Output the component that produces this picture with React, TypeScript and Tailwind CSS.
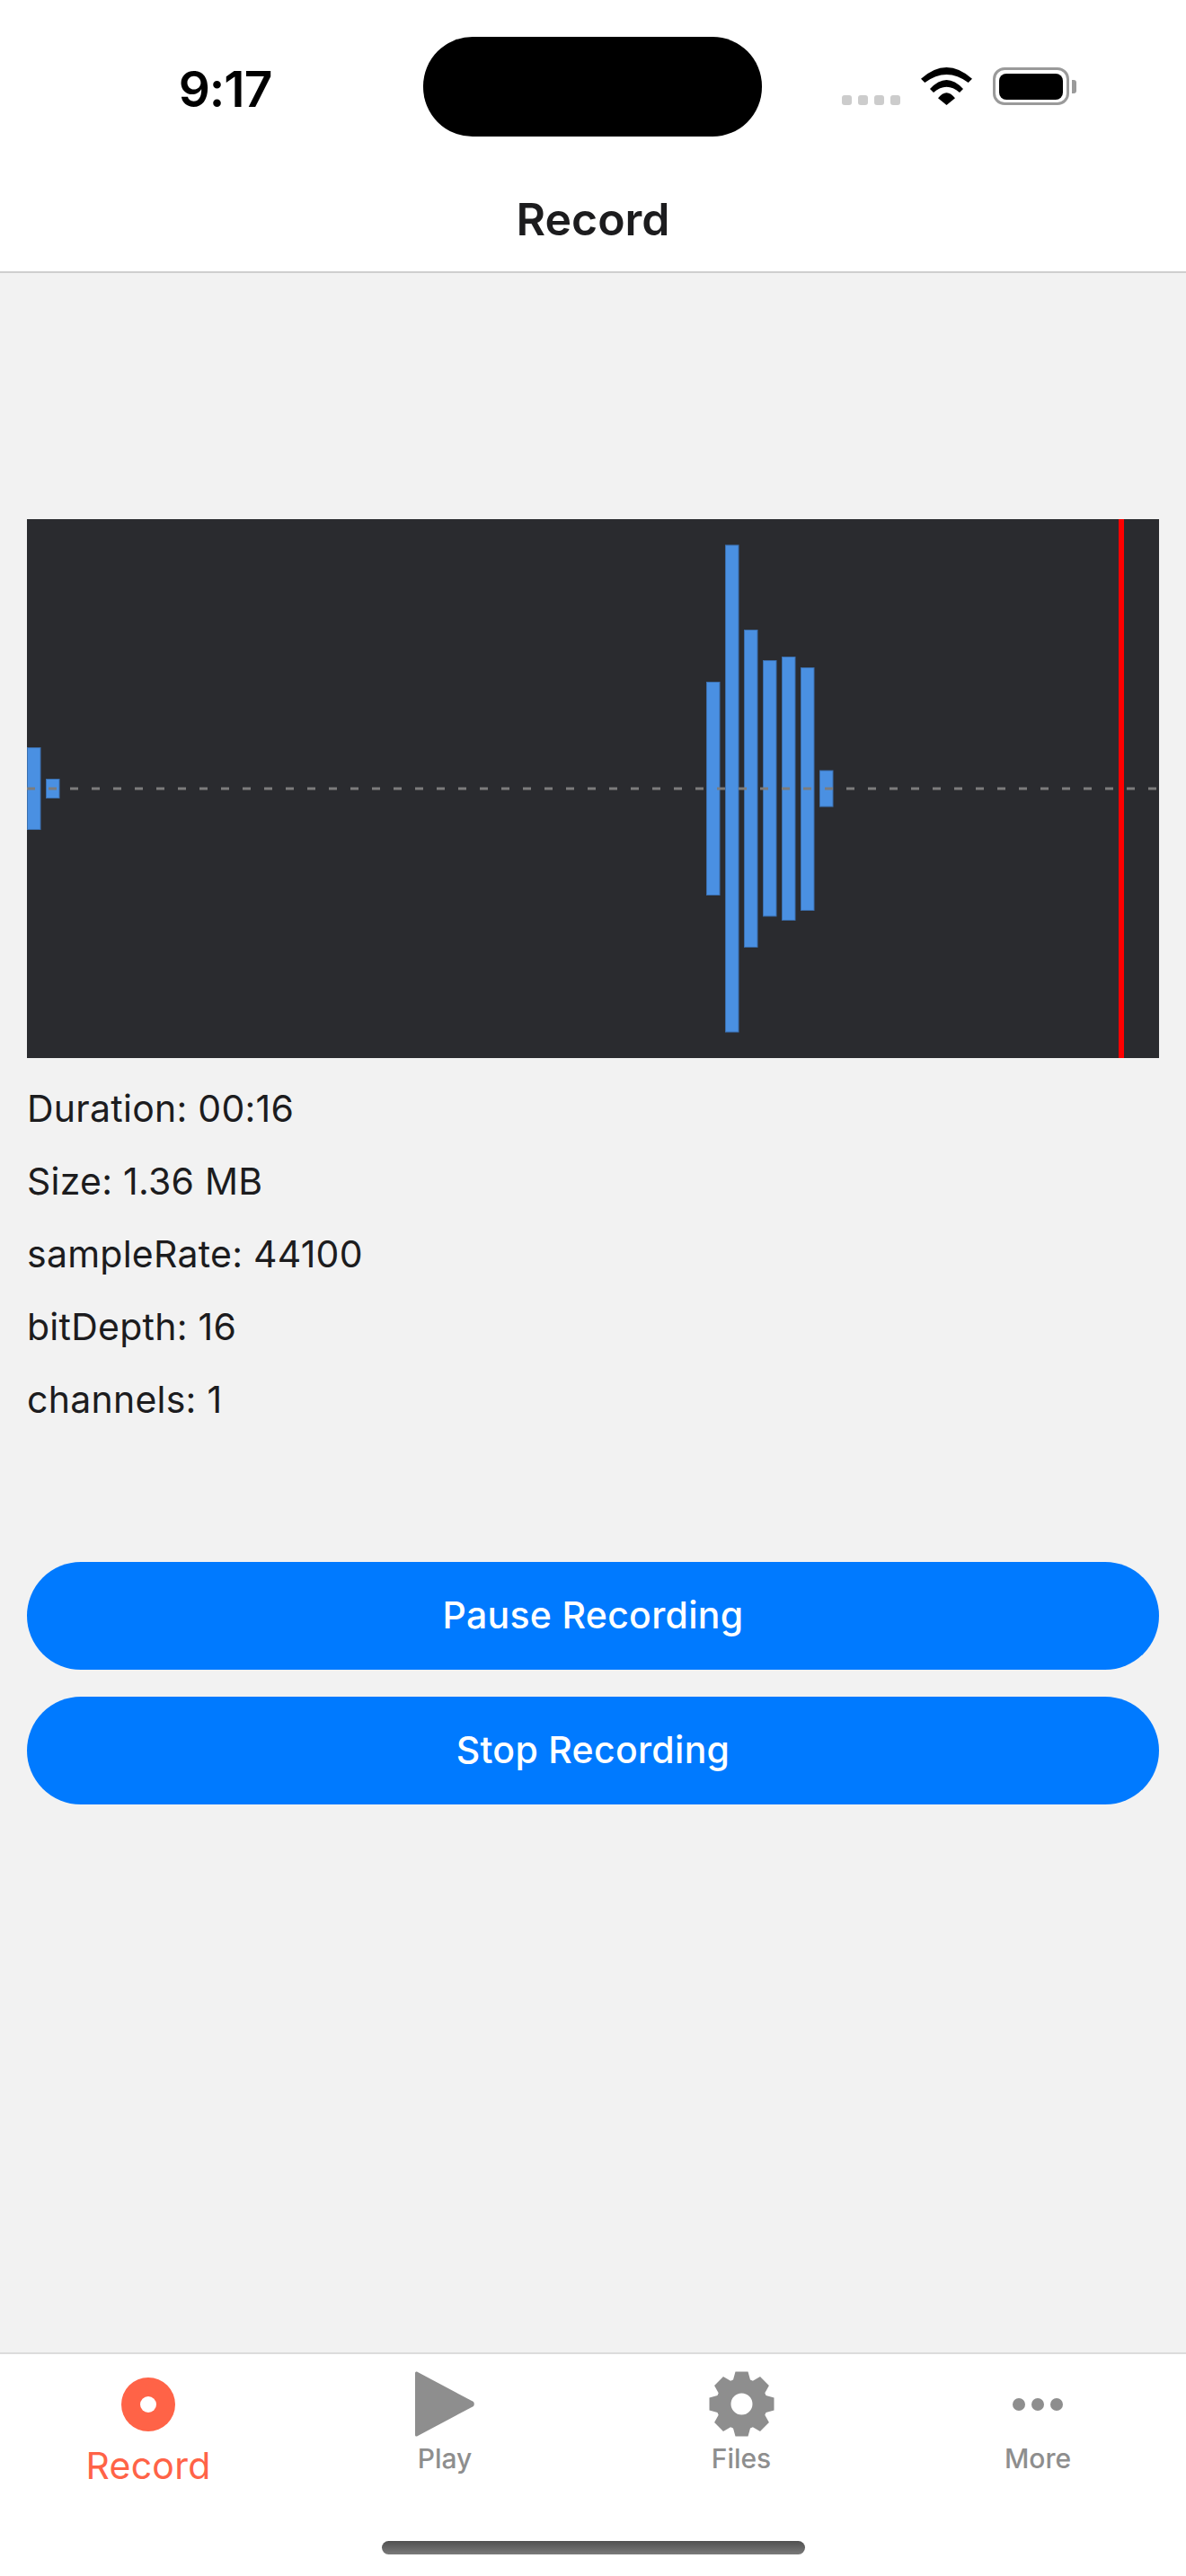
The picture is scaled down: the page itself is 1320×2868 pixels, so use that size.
const BARS = [
  { x: 0, y: 254, h: 92 },
  { x: 21, y: 289, h: 22 },
  { x: 756, y: 181, h: 238 },
  { x: 777, y: 28.5, h: 543 },
  { x: 798, y: 123, h: 354 },
  { x: 819, y: 157, h: 285.5 },
  { x: 840, y: 153, h: 294 },
  { x: 861, y: 165, h: 271 },
  { x: 882, y: 279.5, h: 41 },
];

const STATS = ['Duration: 00:16', 'Size: 1.36 MB', 'sampleRate: 44100', 'bitDepth: 16', 'channels: 1'];

function gearPath() {
  const cx = 36.5;
  const cy = 36;
  const pts: string[] = [];
  for (let i = 0; i < 8; i++) {
    const a = (i * Math.PI) / 4 - Math.PI / 2;
    const at = (r: number, off: number) => {
      const x = cx + r * Math.cos(a) - off * Math.sin(a);
      const y = cy + r * Math.sin(a) + off * Math.cos(a);
      return `${x.toFixed(2)} ${y.toFixed(2)}`;
    };
    pts.push(`${pts.length ? 'L' : 'M'}${at(27, -9.5)}`, `L${at(36, -7)}`, `L${at(36, 7)}`, `L${at(27, 9.5)}`);
  }
  return pts.join(' ') + ' Z M48.5 36 A12 12 0 1 0 24.5 36 A12 12 0 1 0 48.5 36 Z';
}

function Waveform() {
  return (
    <svg viewBox="0 0 1260 600" className="block h-[600px] w-[1260px] bg-[#2a2b2f]">
      {BARS.map((b) => (
        <rect
          key={b.x}
          x={b.x + 0.5}
          y={b.y + 0.5}
          width={14.5}
          height={b.h - 1}
          fill="#4a90e2"
          stroke="#3b6fae"
          strokeWidth={1}
        />
      ))}
      <line x1="0" y1="300" x2="1260" y2="300" stroke="#7c7c7c" strokeWidth={3} strokeDasharray="9 15" />
      <rect x="1215" y="0" width="6" height="600" fill="#ff0000" />
    </svg>
  );
}

function TabBar() {
  return (
    <div className="grid h-[249px] grid-cols-4 border-t-2 border-[#dcdcdc] bg-white">
      <div className="flex flex-col items-center pt-[26px]">
        <div className="flex h-[60px] w-[60px] items-center justify-center rounded-full bg-[#ff6347]">
          <div className="h-[18px] w-[18px] rounded-full bg-white" />
        </div>
        <span className="mt-[14px] text-[41px] leading-[48px] tracking-[0.25px] text-[#ff6347]">Record</span>
      </div>
      <div className="flex flex-col items-center pt-[19px]">
        <svg width="66" height="73" viewBox="0 0 66 73" className="block">
          <path d="M2 0.5 L65 34 Q66.5 36.5 65 39 L2 72.5 Q0 73 0 71 L0 2 Q0 0 2 0.5 Z" fill="#8e8e8e" />
        </svg>
        <span className="mt-[6px] text-[30px] leading-[36px] font-medium text-[#8e8e8e]">Play</span>
      </div>
      <div className="flex flex-col items-center pt-[19px]">
        <svg width="73" height="73" viewBox="0 0 73 72" className="block">
          <path d={gearPath()} fill="#8e8e8e" fillRule="evenodd" />
        </svg>
        <span className="mt-[6px] text-[30px] leading-[36px] font-medium text-[#8e8e8e]">Files</span>
      </div>
      <div className="flex flex-col items-center pt-[19px]">
        <div className="flex h-[73px] items-center gap-[7px]">
          <div className="h-[14px] w-[14px] rounded-full bg-[#8e8e8e]" />
          <div className="h-[14px] w-[14px] rounded-full bg-[#8e8e8e]" />
          <div className="h-[14px] w-[14px] rounded-full bg-[#8e8e8e]" />
        </div>
        <span className="mt-[6px] text-[30px] leading-[36px] font-medium text-[#8e8e8e]">More</span>
      </div>
    </div>
  );
}

export default function App() {
  return (
    <div className="relative flex h-[2868px] w-[1320px] flex-col overflow-hidden bg-[#f2f2f2] font-['Inter',sans-serif] text-[#1c1c1e]">
      <header className="h-[304px] shrink-0 border-b-2 border-[#cfcfcf] bg-white">
        <div className="flex h-[152px] items-start pt-[41px]">
          <div className="flex h-[111px] w-[471px] items-center justify-center pl-[30px] pt-[5px]">
            <span className="text-[55px] leading-none font-semibold tracking-[-1px] text-black">9:17</span>
          </div>
          <div className="h-[111px] w-[377px] rounded-[55px] bg-black" />
          <div className="flex h-[76px] items-end pl-[89px]">
            <div className="flex gap-[7px]">
              <div className="h-[11px] w-[11px] rounded-[3px] bg-[#cccccc]" />
              <div className="h-[11px] w-[11px] rounded-[3px] bg-[#cccccc]" />
              <div className="h-[11px] w-[11px] rounded-[3px] bg-[#cccccc]" />
              <div className="h-[11px] w-[11px] rounded-[3px] bg-[#cccccc]" />
            </div>
            <svg width="57" height="42" viewBox="0 0 57 42" className="ml-[23px] block">
              <path d="M0 12.7 Q28.5 -12.7 57 12.7 L52.7 17 Q28.5 -1 4.3 17 Z" fill="#000" />
              <path d="M10 24 Q28.5 4 47 24 L43 28 Q28.5 15.5 14 28 Z" fill="#000" />
              <path d="M19 34.3 Q28.5 22 38 34.3 L28.5 42 Z" fill="#000" />
            </svg>
            <div className="ml-[23px] flex h-[42px] w-[85px] items-center justify-center rounded-[13px] border-[3px] border-[#9a9a9a]">
              <div className="h-[29px] w-[71px] rounded-[8px] bg-black" />
            </div>
            <div className="mb-[13px] ml-[3px] h-[15px] w-[5px] rounded-r-[3px] bg-[#9a9a9a]" />
          </div>
        </div>
        <div className="flex h-[150px] justify-center pt-[62px]">
          <span className="text-[50px] leading-[60px] font-semibold">Record</span>
        </div>
      </header>

      <main className="flex-1 px-[30px] pt-[274px]">
        <Waveform />
        <div className="flex flex-col gap-[33px] pt-[32px] text-[41px] leading-[48px] tracking-[0.25px]">
          {STATS.map((s) => (
            <div key={s}>{s}</div>
          ))}
        </div>
        <div className="mt-[157px] flex flex-col gap-[30px]">
          <button type="button" className="h-[120px] rounded-full bg-[#007aff] text-[41px] font-medium tracking-[0.3px] text-white">
            Pause Recording
          </button>
          <button type="button" className="h-[120px] rounded-full bg-[#007aff] text-[41px] font-medium tracking-[0.3px] text-white">
            Stop Recording
          </button>
        </div>
      </main>

      <TabBar />
      <div className="absolute bottom-[24px] left-[425px] h-[15px] w-[471px] rounded-[8px] bg-gradient-to-b from-[#505050] to-[#7a7a7a]" />
    </div>
  );
}
